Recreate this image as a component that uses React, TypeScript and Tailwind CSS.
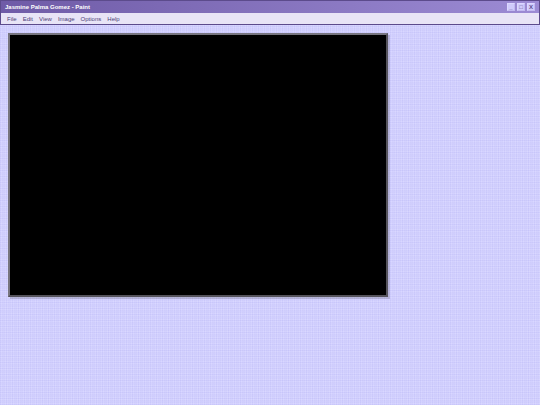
const menuItems = ["File", "Edit", "View", "Image", "Options", "Help"];

const windowButtons = [
  { label: "Minimize", glyph: "_" },
  { label: "Maximize", glyph: "□" },
  { label: "Close", glyph: "X" },
];

function TitleBar() {
  return (
    <header className="flex h-[12px] items-center justify-between bg-linear-to-r from-[#6f5ba7] to-[#9c8bd4] px-1">
      <h1 className="text-[6px] leading-[8px] font-bold text-white">Jasmine Palma Gomez - Paint</h1>
      <div className="flex gap-[2px]">
        {windowButtons.map((b) => (
          <button
            key={b.label}
            aria-label={b.label}
            className="flex h-[8px] w-[8px] items-center justify-center border border-t-[#dcd7ff] border-r-[#c3baf0] border-b-[#c3baf0] border-l-[#dcd7ff] bg-[#d0cbfc] text-[6px] leading-[6px] font-bold text-[#5c4b8c]"
          >
            {b.glyph}
          </button>
        ))}
      </div>
    </header>
  );
}

function MenuBar() {
  return (
    <nav className="flex h-[11px] items-center gap-[6px] bg-[#e8e4f6] px-[6px]">
      {menuItems.map((item) => (
        <button key={item} className="text-[6px] leading-[8px] text-[#4d4078]">
          {item}
        </button>
      ))}
    </nav>
  );
}

export default function App() {
  return (
    <div className="min-h-screen bg-[#d9d7ff] bg-[repeating-linear-gradient(0deg,#b0aef424_0px_1px,transparent_1px_2px),repeating-linear-gradient(90deg,#b0aef424_0px_1px,transparent_1px_2px),repeating-linear-gradient(0deg,#b0aef41c_0px_1px,transparent_1px_3px),repeating-linear-gradient(90deg,#b0aef41c_0px_1px,transparent_1px_3px)] font-['Liberation_Sans',Arial,sans-serif]">
      <div className="border border-[#5c4b8c]">
        <TitleBar />
        <MenuBar />
      </div>
      <main className="p-2">
        <canvas
          aria-label="Drawing canvas"
          className="block aspect-[380/264] w-[380px] max-w-full border-2 border-t-[#77757f] border-r-[#55535b] border-b-[#55535b] border-l-[#77757f] bg-black shadow-[2px_2px_0_#00000026]"
        />
      </main>
    </div>
  );
}
